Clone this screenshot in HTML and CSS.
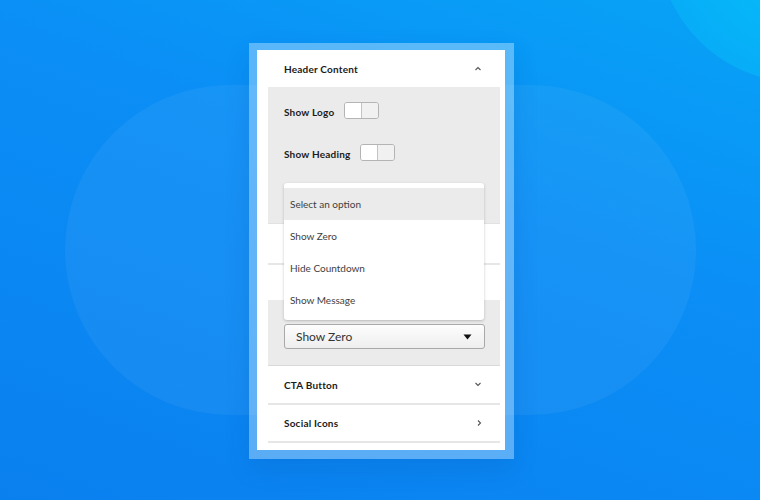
FILE: index.html
```html
<!DOCTYPE html>
<html lang="en">
<head>
    <meta charset="UTF-8">
    <meta name="viewport" content="width=device-width, initial-scale=1.0">
    <title>Countdown settings</title>
    <link rel="stylesheet" href="styles.css">
</head>
<body>
    <div class="stage">
        <div class="frame">
            <div class="panel">

                <div class="acc-head">
                    <span>Header Content</span>
                    <svg class="chev" width="8" height="5" viewBox="0 0 8 5"><path d="M1.5 4L4 1.5L6.5 4" fill="none" stroke="#555" stroke-width="1.1"/></svg>
                </div>

                <div class="acc-body">
                    <div class="toggle-row">
                        <label>Show Logo</label>
                        <div class="toggle"><span></span><span></span></div>
                    </div>
                    <div class="toggle-row">
                        <label>Show Heading</label>
                        <div class="toggle"><span></span><span></span></div>
                    </div>
                </div>

                <div class="sub-row"></div>
                <div class="sub-row second"></div>

                <div class="acc-body select-body">
                    <div class="select-box">
                        <span>Show Zero</span>
                        <svg width="9" height="6" viewBox="0 0 9 6"><path d="M0.5 0.5H8.5L4.5 5.5Z" fill="#111"/></svg>
                    </div>
                </div>

                <div class="acc-head closed">
                    <span>CTA Button</span>
                    <svg class="chev" width="8" height="5" viewBox="0 0 8 5"><path d="M1.5 1L4 3.5L6.5 1" fill="none" stroke="#555" stroke-width="1.1"/></svg>
                </div>
                <div class="acc-head closed">
                    <span>Social Icons</span>
                    <svg class="chev" width="5" height="8" viewBox="0 0 5 8"><path d="M1 1.5L3.5 4L1 6.5" fill="none" stroke="#555" stroke-width="1.1"/></svg>
                </div>

                <!-- open dropdown sits over the rows -->
                <ul class="options">
                    <li class="active">Select an option</li>
                    <li>Show Zero</li>
                    <li>Hide Countdown</li>
                    <li>Show Message</li>
                </ul>
            </div>
        </div>
    </div>
</body>
</html>
```

FILE: styles.css
```css
*{
    margin: 0;
    padding: 0;
    box-sizing: border-box;
}
body{
    width: 760px;
    height: 500px;
    overflow: hidden;
    font-family: Lato, "Open Sans", Arial, sans-serif;
    background:
        radial-gradient(circle at 800px -60px, #05c0fb 0, #07adf7 142px, transparent 143px),
        linear-gradient(200deg, #07a3f6 0, #0b8ef6 40%, #0a80ef 100%);
}
.stage{
    position: relative;
    height: 500px;
    display: flex;
    align-items: center;
    justify-content: center;
}
/* soft pill shape in the background */
.stage::before{
    content: "";
    position: absolute;
    left: 65px;
    top: 85px;
    width: 631px;
    height: 330px;
    border-radius: 165px;
    background: rgba(255, 255, 255, 0.05);
}
.frame{
    position: relative;
    margin: 2px 0 0 3px;
    padding: 7px 9px 9px 8px;
    background: rgba(255, 255, 255, 0.33);
    box-shadow: 0 10px 24px rgba(0, 40, 120, 0.12);
}
.panel{
    position: relative;
    width: 248px;
    height: 400px;
    background: #fff;
    padding: 0 5px 0 11px;
}
.acc-head{
    height: 37px;
    padding: 0 18px 0 16px;
    display: flex;
    align-items: center;
    justify-content: space-between;
    font-size: 10px;
    font-weight: bold;
    color: #1b1b1b;
    letter-spacing: 0.2px;
}
.acc-head.closed{
    height: 39px;
    border-bottom: 2px solid #e6e6e6;
}
.acc-head.closed:last-of-type{
    height: 38px;
}
.acc-body{
    background: #ebebeb;
    height: 136px;
    padding: 15px 16px 0;
}
.toggle-row{
    display: flex;
    align-items: center;
    gap: 10px;
    height: 17px;
    margin-bottom: 25px;
}
.toggle-row label{
    font-size: 10px;
    font-weight: bold;
    color: #1b1b1b;
    letter-spacing: 0.2px;
    padding-top: 3px;
}
.toggle{
    display: flex;
    width: 35px;
    height: 17px;
    border: 1px solid #b4b4b4;
    border-radius: 3px;
    overflow: hidden;
}
.toggle span{
    flex: 1;
    background: #fff;
}
.toggle span + span{
    background: #f1f1f1;
    border-left: 1px solid #c4c4c4;
}
.sub-row{
    height: 40px;
    border-top: 1px solid #e2e2e2;
}
.sub-row.second{
    height: 37px;
    border-top: 2px solid #e6e6e6;
}
.select-body{
    height: 66px;
    padding-top: 24px;
    border-bottom: 1px solid #d9d9d9;
}
.select-box{
    width: 201px;
    height: 25px;
    padding: 0 12px 0 11px;
    display: flex;
    align-items: center;
    justify-content: space-between;
    border: 1px solid #a9a9a9;
    border-radius: 3px;
    background: linear-gradient(#fdfdfd, #eeeeee);
    font-size: 12px;
    color: #333;
}
.options{
    position: absolute;
    left: 27px;
    top: 133px;
    width: 200px;
    padding: 5px 0 4px;
    list-style: none;
    background: #fff;
    border-radius: 3px;
    box-shadow: 0 1px 3px rgba(0, 0, 0, 0.22);
}
.options li{
    height: 32px;
    line-height: 32px;
    padding-left: 6px;
    font-size: 10px;
    color: #3e3e3e;
}
.options li.active{
    background: #ebebeb;
}
```
